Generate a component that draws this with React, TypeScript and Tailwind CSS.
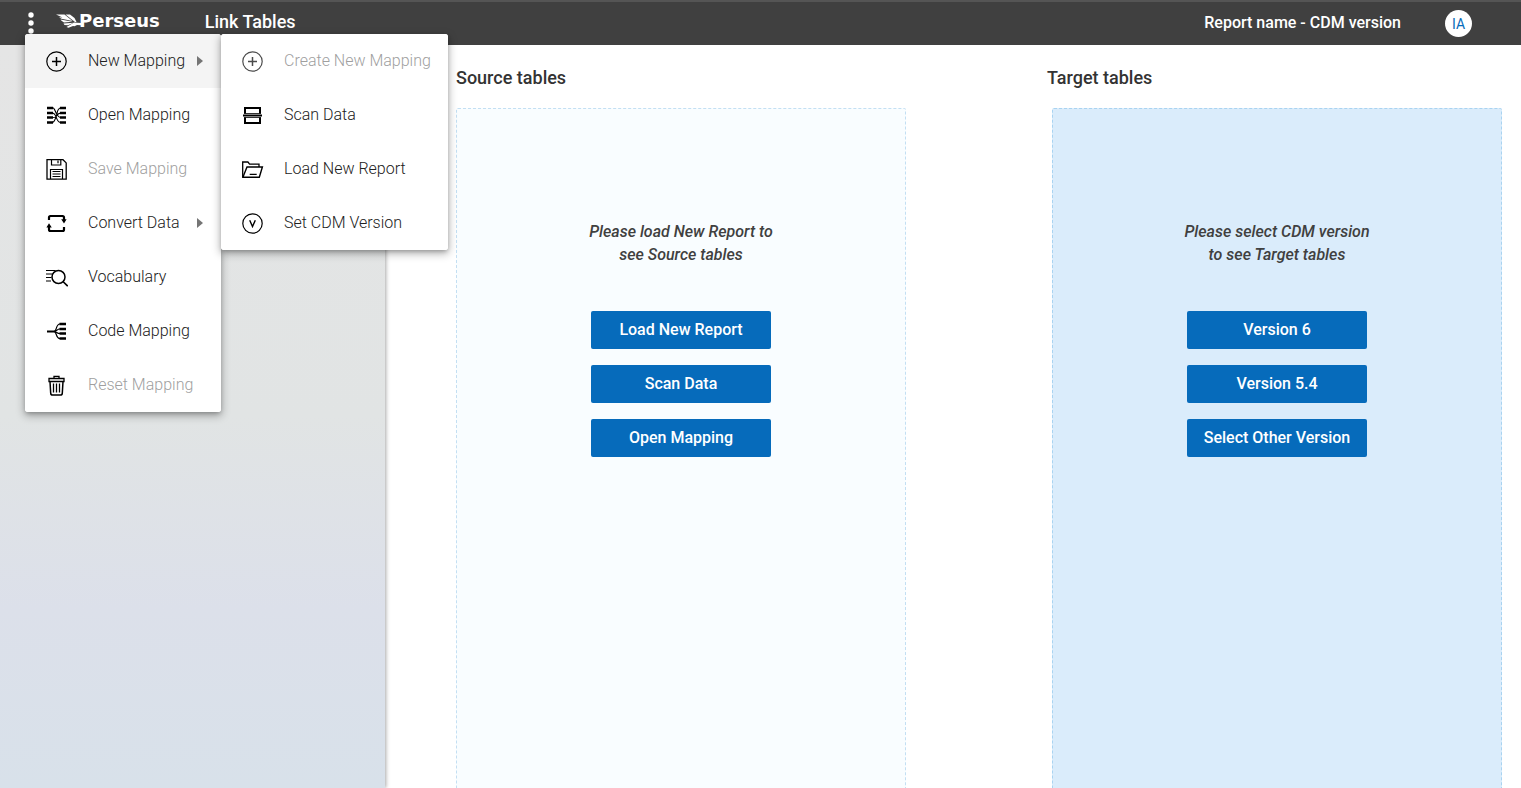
import type { ReactNode } from "react";

type IconProps = { children: ReactNode; className?: string };

function Icon({ children, className = "" }: IconProps) {
  return (
    <svg
      viewBox="0 0 24 24"
      className={`size-6 shrink-0 ${className}`}
      fill="none"
      stroke="black"
      aria-hidden="true"
    >
      {children}
    </svg>
  );
}

const plusIcon = (
  <>
    <circle cx="12.5" cy="12.5" r="9.7" strokeWidth="1.2" />
    <path d="M12.5 8v9M8 12.5h9" strokeWidth="1.5" />
  </>
);

const openMappingIcon = (
  <>
    <path
      d="M3 5h6M3 10h6M3 14.5h6M3 19.500h6M16 5h6M16 10h6M16 14.5h6M16 19.500h6"
      strokeWidth="2.4"
    />
    <path
      d="M8 4.500c3 0 3 4.500 5 7s1.500 3 4 3M8 10c3 0 3.500 2.500 4.500 5s1.500 4.500 4.500 4.500M8 14.500c5 0 4.500-1 5-4s1-5.500 4-5.500M8 19.500c3 0 3-4 4.500-6.500s2-3 4.500-3"
      strokeWidth="1.1"
    />
  </>
);

const saveIcon = (
  <>
    <path d="M3 2.700h16l3.200 3.200v16.200H3z" strokeWidth="1.3" />
    <path d="M7.500 2.700v5.300h9.300V2.700M14 3.500v2.700" strokeWidth="1.2" />
    <path d="M6.500 22v-9.500h12V22" strokeWidth="1.2" />
    <path d="M8.500 14.500h8M8.500 17h8M8.500 19.500h8" strokeWidth="1.2" />
  </>
);

const convertIcon = (
  <>
    <path d="M5 9V6.500Q5 5 6.500 5h12Q20 5 20 6.500v3" strokeWidth="2.2" />
    <path d="M20 16v2.500q0 1.500-1.500 1.500h-12Q5 20 5 18.500v-3" strokeWidth="2.2" />
    <path d="M17.200 8.200h5.400l-2.600 4.200zM2.400 16.600h5.400l-2.800-4.400z" fill="black" stroke="none" />
  </>
);

const vocabularyIcon = (
  <>
    <circle cx="14.5" cy="12" r="6.5" strokeWidth="1.5" />
    <path d="M19.200 16.700l4.500 4.500" strokeWidth="1.6" />
    <path d="M2 5.500h9.500M2 9h6.500M2 12.500h5.500M2 16h5" strokeWidth="1.2" />
  </>
);

const codeMappingIcon = (
  <>
    <path d="M15.500 5h6.500M15.500 10h6.500M15.500 14.500h6.500M15.500 19.500h6.500" strokeWidth="2.4" />
    <path d="M3 12.500h8" strokeWidth="2" />
    <path
      d="M10 12.500c3 0 1.500-7.500 6-7.500M10 12.500c3 0 2.500-2.500 6-2.500M10 12.500c3 0 2.500 2 6 2M10 12.500c3 0 1.500 7 6 7"
      strokeWidth="1.2"
    />
  </>
);

const trashIcon = (
  <>
    <path d="M5 5.500h15v3H5zM10 5.500V3.300h5v2.200" strokeWidth="1.3" />
    <path d="M6 8.500l.7 11.600q.1 1.900 1.900 1.900h7.800q1.800 0 1.900-1.900l.7-11.600" strokeWidth="1.5" />
    <path d="M9.500 10.500v9M12.500 10.500v9M15.500 10.500v9" strokeWidth="1.3" />
  </>
);

const scanIcon = (
  <>
    <path d="M5 10.500V5h15v5.500M5 14.500V20h15v-5.500" strokeWidth="2" />
    <path d="M3 12.500h19" strokeWidth="1.800" />
    <path d="M4 10.500h17M4 14.500h17" strokeWidth=".8" />
  </>
);

const folderIcon = (
  <>
    <path d="M2.700 20V5h5.200l1.700 2.200h9.400V10" strokeWidth="1.3" />
    <path d="M2.900 20.200L7 10h15.400l-3.100 10.200z" strokeWidth="1.4" />
    <path d="M9.700 17.300h7" strokeWidth="1.3" />
  </>
);

const versionIcon = (
  <>
    <circle cx="12.5" cy="12.5" r="9.7" strokeWidth="1.2" />
    <path d="M9.700 9.200l2.800 6.400 2.800-6.400" strokeWidth="1.4" />
  </>
);

type MenuEntry = {
  label: string;
  icon: ReactNode;
  disabled?: boolean;
  active?: boolean;
  submenu?: boolean;
  fadedIcon?: boolean;
};

const mainMenu: MenuEntry[] = [
  { label: "New Mapping", icon: plusIcon, active: true, submenu: true },
  { label: "Open Mapping", icon: openMappingIcon },
  { label: "Save Mapping", icon: saveIcon, disabled: true },
  { label: "Convert Data", icon: convertIcon, submenu: true },
  { label: "Vocabulary", icon: vocabularyIcon },
  { label: "Code Mapping", icon: codeMappingIcon },
  { label: "Reset Mapping", icon: trashIcon, disabled: true },
];

const newMappingMenu: MenuEntry[] = [
  { label: "Create New Mapping", icon: plusIcon, disabled: true, fadedIcon: true },
  { label: "Scan Data", icon: scanIcon },
  { label: "Load New Report", icon: folderIcon },
  { label: "Set CDM Version", icon: versionIcon },
];

function Menu({ label, entries, className }: { label: string; entries: MenuEntry[]; className: string }) {
  return (
    <div
      role="menu"
      aria-label={label}
      className={`overflow-hidden rounded-[3px] bg-white shadow-[0_2px_4px_-1px_rgba(0,0,0,0.25),0_3px_8px_1px_rgba(0,0,0,0.28)] ${className}`}
    >
      {entries.map((entry) => (
        <button
          key={entry.label}
          type="button"
          role="menuitem"
          disabled={entry.disabled}
          className={`flex h-[54px] w-full items-center pl-[19px] text-left text-base font-light ${
            entry.active ? "bg-[#f4f4f4]" : "bg-white"
          } ${entry.disabled ? "text-[#9f9f9f]" : "text-[#212121]"}`}
        >
          <Icon className={entry.fadedIcon ? "opacity-70" : ""}>{entry.icon}</Icon>
          <span className="ml-5 whitespace-nowrap">{entry.label}</span>
          {entry.submenu && (
            <svg viewBox="0 0 6 10" className="mr-[18px] ml-auto h-2.5 w-1.5" aria-hidden="true">
              <path d="M0 0l6 5-6 5z" fill="#757575" />
            </svg>
          )}
        </button>
      ))}
    </div>
  );
}

type PanelProps = {
  title: string;
  lines: [string, string];
  actions: string[];
  titleClass: string;
  panelClass: string;
};

function TablesPanel({ title, lines, actions, titleClass, panelClass }: PanelProps) {
  return (
    <section className="flex w-[450px] flex-col">
      <h2 className={`text-lg leading-6 font-medium text-[#333] ${titleClass}`}>{title}</h2>
      <div
        className={`mt-[18px] flex grow flex-col items-center rounded-t-xs border border-b-0 border-dashed pt-[111px] ${panelClass}`}
      >
        <p className="text-center text-base leading-[23px] font-medium text-[#404040] italic">
          {lines[0]}
          <br />
          {lines[1]}
        </p>
        <div className="mt-[45px] flex w-[180px] flex-col gap-4">
          {actions.map((action) => (
            <button
              key={action}
              type="button"
              className="h-[38px] rounded-xs bg-[#066bbb] text-base font-medium whitespace-nowrap text-white"
            >
              {action}
            </button>
          ))}
        </div>
      </div>
    </section>
  );
}

function Logo() {
  return (
    <a href="#" className="flex items-center text-white">
      <svg viewBox="0 0 25 15" className="-mr-0.5 h-[15px] w-[25px]" fill="white" aria-hidden="true">
        <path d="M0 .5h8.500l8 6.500L5.500 4.800 3 3.300l3.500.2z" />
        <path d="M9.500 .5H14L18.500 4l2 4L19 8z" />
        <path d="M4.500 5.500l12 2.300-8.500.6-2.500-1.600z" />
        <path d="M7.500 9.500l10-.8-5.500 2.600-3.500-.3z" />
        <path d="M10.500 13l7.500-4.600L25 9v2.200l-4-.2-2.500 1.200-1.500-.2-4.500 1.800z" />
      </svg>
      <span className="font-['DejaVu_Sans',sans-serif] text-lg leading-6 font-bold">Perseus</span>
    </a>
  );
}

export default function App() {
  return (
    <div className="flex h-screen flex-col overflow-hidden bg-white font-[Roboto,sans-serif]">
      <header className="relative z-10 flex h-[45px] shrink-0 items-start border-t-2 border-[#555] bg-[#404040] text-white">
        <button type="button" aria-label="Menu" className="mt-2.5 ml-7 w-1.5">
          <svg viewBox="0 0 6 22" className="h-[22px] w-1.5" fill="white" aria-hidden="true">
            <circle cx="3" cy="3" r="2.7" />
            <circle cx="3" cy="11" r="2.7" />
            <circle cx="3" cy="19" r="2.7" />
          </svg>
        </button>
        <div className="mt-[7px] ml-[22px]">
          <Logo />
        </div>
        <h1 className="mt-2 ml-[45px] text-lg leading-6 font-medium">Link Tables</h1>
        <p className="mt-[9px] mr-11 ml-auto text-base leading-6 font-medium">Report name - CDM version</p>
        <button
          type="button"
          aria-label="Account"
          className="mt-2 mr-[49px] size-[27px] rounded-full bg-white text-sm text-[#066bbb]"
        >
          IA
        </button>
        <div className="absolute top-8 left-[25px] flex items-start">
          <Menu label="Main menu" entries={mainMenu} className="w-[196px]" />
          <Menu label="New Mapping" entries={newMappingMenu} className="w-[227px]" />
        </div>
      </header>
      <div className="flex min-h-0 grow">
        <aside className="w-[385px] shrink-0 bg-[linear-gradient(#e5e5e5,#e1e4e4_50%,#dce0ea_76%,#d8e1ea)] shadow-[1px_0_4px_rgba(0,0,0,0.35)]" />
        <main className="flex grow justify-between pt-[21px] pr-[19px] pl-[71px]">
          <TablesPanel
            title="Source tables"
            lines={["Please load New Report to", "see Source tables"]}
            actions={["Load New Report", "Scan Data", "Open Mapping"]}
            titleClass=""
            panelClass="border-[#c3dff3] bg-[#f9fdff]"
          />
          <TablesPanel
            title="Target tables"
            lines={["Please select CDM version", "to see Target tables"]}
            actions={["Version 6", "Version 5.4", "Select Other Version"]}
            titleClass="-ml-[5px]"
            panelClass="border-[#a9d3f1] bg-[#daecfb]"
          />
        </main>
      </div>
    </div>
  );
}
